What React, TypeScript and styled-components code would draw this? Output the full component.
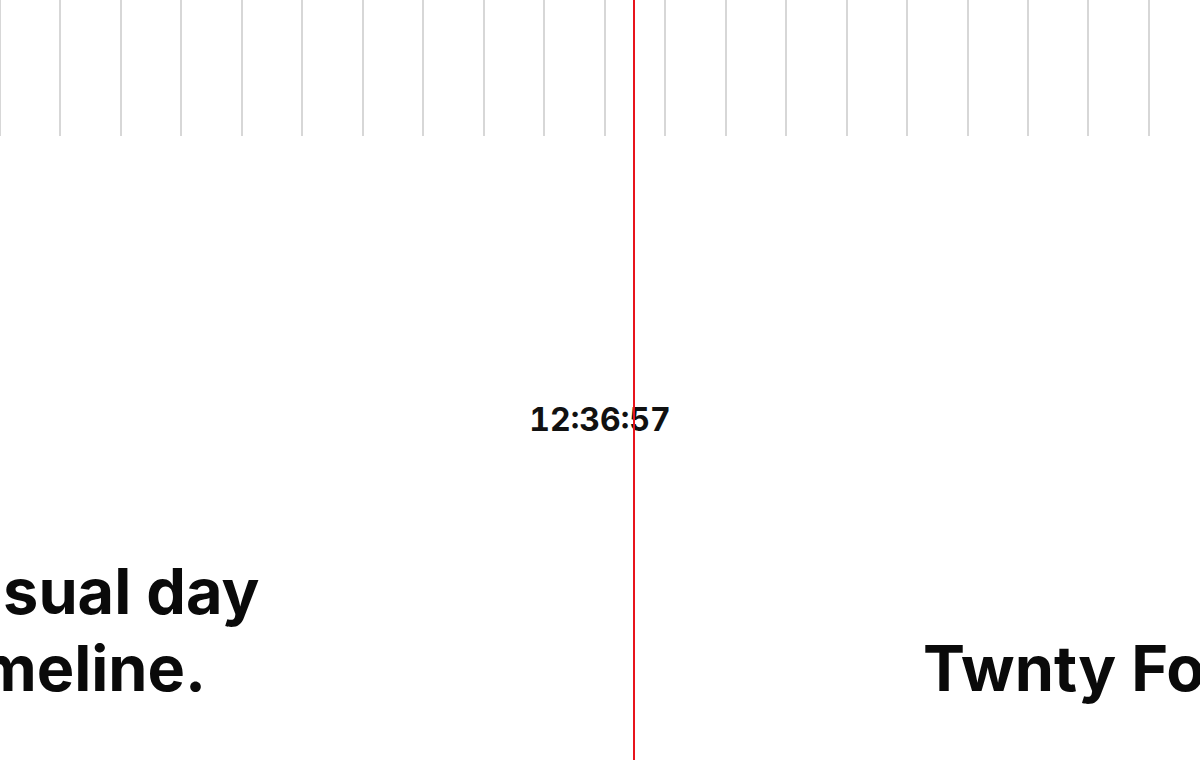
import React from "react";
import styled, { createGlobalStyle } from "styled-components";

const Global = createGlobalStyle`
  html, body, #root { margin: 0; padding: 0; width: 100%; height: 100%; }
  body { background: #ffffff; font-family: Inter, "Liberation Sans", sans-serif; overflow: hidden; }
`;

const Page = styled.div`
  position: relative;
  width: 1200px;
  height: 760px;
  overflow: hidden;
  background: #ffffff;
  display: flex;
  flex-direction: column;
`;

const Ruler = styled.div`
  display: flex;
  height: 136px;
  margin-left: -1px;
  flex: none;
`;

const Tick = styled.div`
  flex: none;
  width: 60.47px;
  height: 100%;
  box-sizing: border-box;
  border-left: 2px solid #d7d7d7;
`;

const Clock = styled.div`
  margin-top: 268px;
  height: 32px;
  font-size: 32px;
  line-height: 32px;
  font-weight: 700;
  color: #111;
  text-align: center;
  font-variant-numeric: tabular-nums;
`;

const HeadlineRow = styled.div`
  margin-top: 117px;
  margin-left: -61px;
  display: grid;
  grid-template-columns: 984px auto;
  align-items: end;
  white-space: nowrap;
`;

const Headline = styled.h1`
  margin: 0;
  font-size: 63px;
  line-height: 77px;
  font-weight: 700;
  color: #0a0a0a;
  letter-spacing: 0;
`;

const NowLine = styled.div`
  position: absolute;
  top: 0;
  bottom: 0;
  left: 632.5px;
  width: 2.5px;
  background: #e8141c;
`;

export default function App() {
  const ticks = Array.from({ length: 21 });
  return (
    <>
      <Global />
      <Page>
        <Ruler>
          {ticks.map((_, i) => (
            <Tick key={i} />
          ))}
        </Ruler>
        <Clock>12:36:57</Clock>
        <HeadlineRow>
          <Headline>
            Visual day
            <br />
            timeline.
          </Headline>
          <Headline>Twnty Four</Headline>
        </HeadlineRow>
        <NowLine />
      </Page>
    </>
  );
}
